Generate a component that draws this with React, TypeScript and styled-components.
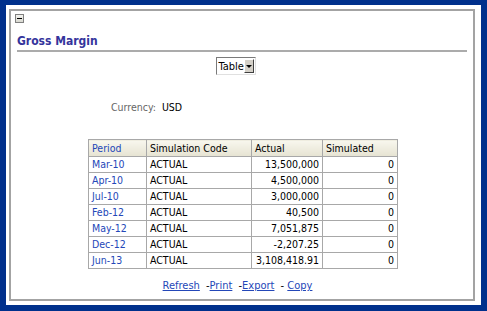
import styled, { createGlobalStyle } from 'styled-components';

const GlobalStyle = createGlobalStyle`
    html, body {
        margin: 0;
        padding: 0;
        background: #00308c;
    }
    body {
        font-family: 'DejaVu Sans Condensed', 'DejaVu Sans', Verdana, sans-serif;
        font-stretch: condensed;
        font-size: 10px;
    }
`;

const Frame = styled.div`
    width: 487px;
    height: 311px;
    box-sizing: border-box;
    padding: 5px 6px 6px 6px;
    display: flex;
`;

const Panel = styled.div`
    flex: 1;
    background: #ffffff;
    padding: 4px 6px 4px 3px;
    display: flex;
`;

const Portlet = styled.div`
    flex: 1;
    border: 2px solid #a3a3a3;
    display: flex;
    flex-direction: column;
    padding: 3px 6px 0 3px;
`;

const Toggle = styled.div`
    width: 9px;
    height: 9px;
    margin-left: 1px;
    box-sizing: border-box;
    border: 1px solid #808080;
    background: linear-gradient(#f4f4f0, #d8d8d0);
    display: flex;
    align-items: center;
    justify-content: center;

    &::after {
        content: '';
        width: 5px;
        height: 1px;
        background: #000;
    }
`;

const Title = styled.h1`
    margin: 11px 0 0 3px;
    font-size: 12px;
    font-weight: bold;
    color: #34349c;
    padding-bottom: 2px;
    border-bottom: 2px solid #ababab;
    line-height: 14px;
`;

const SelectRow = styled.div`
    display: flex;
    justify-content: center;
    padding-right: 10px;
    margin-top: 5px;
`;

const Select = styled.div`
    width: 40px;
    height: 18px;
    box-sizing: border-box;
    border: 1px solid;
    border-color: #7a7a7a #e0e0e0 #e0e0e0 #7a7a7a;
    display: flex;
    align-items: center;
    background: #fff;
    padding: 1px;
`;

const SelectText = styled.span`
    flex: 1;
    font-size: 11px;
    padding-left: 1px;
`;

const SelectButton = styled.span`
    width: 13px;
    height: 14px;
    box-sizing: border-box;
    background: #d4d0c8;
    border: 1px solid;
    border-color: #fff #404040 #404040 #fff;
    display: flex;
    align-items: center;
    justify-content: center;

    &::after {
        content: '';
        border-left: 3px solid transparent;
        border-right: 3px solid transparent;
        border-top: 3px solid #000;
    }
`;

const Currency = styled.div`
    margin: 26px 0 0 97px;
    display: flex;
    gap: 6px;
    font-size: 10.5px;
`;

const Label = styled.span`
    color: #666;
`;

const TableRow = styled.div`
    margin: 26px 0 0 74px;
`;

const Grid = styled.table`
    border-collapse: collapse;
    font-size: 10.5px;

    th, td {
        border: 1px solid #a8a8a8;
        height: 15px;
        padding: 0 3px;
        white-space: nowrap;
        line-height: 13px;
    }

    th {
        height: 16px;
        font-weight: normal;
        text-align: left;
        background: linear-gradient(#f8f7ee, #e6e3d2);
    }
`;

const Cell = styled.td<{ $align?: 'left' | 'right'; $link?: boolean }>`
    text-align: ${(p) => p.$align ?? 'left'};
    color: ${(p) => (p.$link ? '#2447b8' : '#000')};
`;

const HeadCell = styled.th<{ $w: number; $link?: boolean }>`
    width: ${(p) => p.$w}px;
    color: ${(p) => (p.$link ? '#2447b8' : '#000')};
`;

const Links = styled.div`
    margin-top: 10px;
    display: flex;
    justify-content: center;
    padding-right: 6px;
    font-size: 11px;
`;

const Link = styled.a`
    color: #2447b8;
    text-decoration: underline;
`;

const Sep = styled.span`
    white-space: pre;
    margin-left: 3px;
`;

const rows: [string, string, string, string][] = [
    ['Mar-10', 'ACTUAL', '13,500,000', '0'],
    ['Apr-10', 'ACTUAL', '4,500,000', '0'],
    ['Jul-10', 'ACTUAL', '3,000,000', '0'],
    ['Feb-12', 'ACTUAL', '40,500', '0'],
    ['May-12', 'ACTUAL', '7,051,875', '0'],
    ['Dec-12', 'ACTUAL', '-2,207.25', '0'],
    ['Jun-13', 'ACTUAL', '3,108,418.91', '0'],
];

export default function App() {
    return (
        <>
            <GlobalStyle />
            <Frame>
                <Panel>
                    <Portlet>
                        <Toggle />
                        <Title>Gross Margin</Title>
                        <SelectRow>
                            <Select>
                                <SelectText>Table</SelectText>
                                <SelectButton />
                            </Select>
                        </SelectRow>
                        <Currency>
                            <Label>Currency:</Label>
                            <span>USD</span>
                        </Currency>
                        <TableRow>
                            <Grid>
                                <thead>
                                    <tr>
                                        <HeadCell $w={51} $link>Period</HeadCell>
                                        <HeadCell $w={98}>Simulation Code</HeadCell>
                                        <HeadCell $w={64}>Actual</HeadCell>
                                        <HeadCell $w={68}>Simulated</HeadCell>
                                    </tr>
                                </thead>
                                <tbody>
                                    {rows.map((r) => (
                                        <tr key={r[0]}>
                                            <Cell $link>{r[0]}</Cell>
                                            <Cell>{r[1]}</Cell>
                                            <Cell $align="right">{r[2]}</Cell>
                                            <Cell $align="right">{r[3]}</Cell>
                                        </tr>
                                    ))}
                                </tbody>
                            </Grid>
                        </TableRow>
                        <Links>
                            <Link href="#">Refresh</Link>
                            <Sep> -</Sep>
                            <Link href="#">Print</Link>
                            <Sep> -</Sep>
                            <Link href="#">Export</Link>
                            <Sep> - </Sep>
                            <Link href="#">Copy</Link>
                        </Links>
                    </Portlet>
                </Panel>
            </Frame>
        </>
    );
}
